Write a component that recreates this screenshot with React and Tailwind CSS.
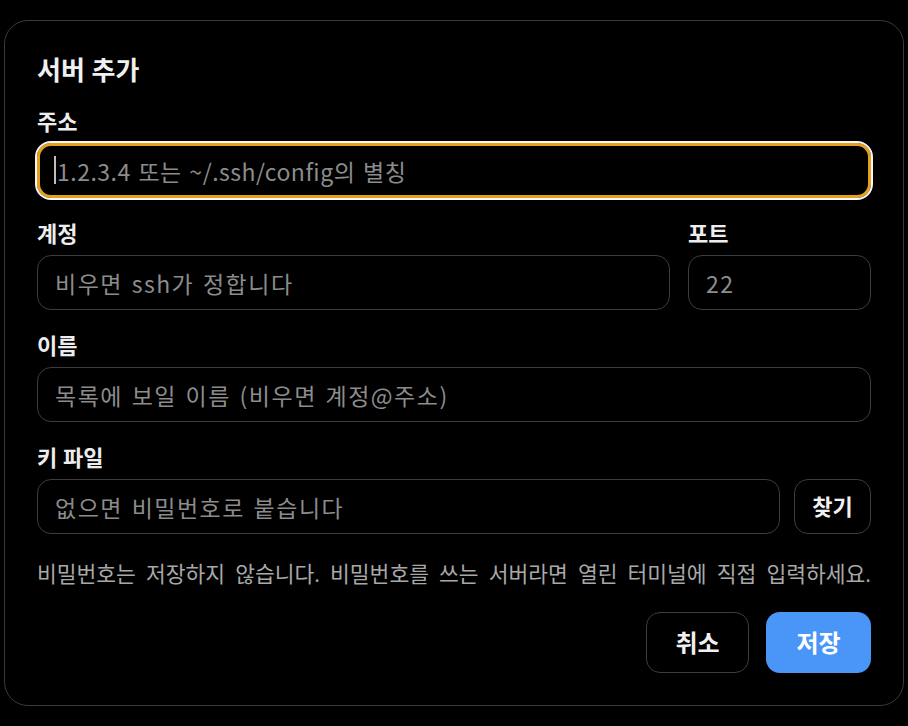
import { useState } from 'react'

const font = { fontFamily: '"Open Sans", "Noto Sans CJK KR", sans-serif' }
const inputFont = { fontFamily: '"Noto Sans CJK KR", "Noto Sans", sans-serif' }

function Field({ label, children, className = '' }) {
  return (
    <div className={`flex flex-col gap-[10px] ${className}`}>
      <label className="text-[22px] font-bold leading-[24px] text-[#ededed]">{label}</label>
      {children}
    </div>
  )
}

function TextInput({ placeholder, value, onChange, className = '' }) {
  return (
    <input
      value={value}
      onChange={onChange}
      placeholder={placeholder}
      style={inputFont}
      className={`h-[55px] w-full min-w-0 rounded-[14px] border border-[#3d3d3d] bg-black px-[17px] text-[23px] tracking-[1.5px] [word-spacing:2px] text-[#e5e5e5] placeholder:text-[#8c8c8c] outline-none ${className}`}
    />
  )
}

export default function App() {
  const [form, setForm] = useState({ host: '', user: '', port: '', name: '', key: '' })
  const set = (k) => (e) => setForm({ ...form, [k]: e.target.value })

  return (
    <div className="min-h-screen bg-black flex items-center justify-center px-[4px] py-[20px]" style={font}>
      <div className="w-[900px] rounded-[24px] border border-[#3a3a3a] bg-black px-8 pt-[33px] pb-8 flex flex-col">
        <h2 className="text-[26px] font-bold leading-[32px] text-[#f0f0f0]">서버 추가</h2>

        <Field label="주소" className="mt-[23px]">
          <div className="relative">
            <input
              value={form.host}
              onChange={set('host')}
              placeholder="1.2.3.4 또는 ~/.ssh/config의 별칭"
              style={inputFont}
              className="h-[55px] w-full rounded-[14px] border-[3px] border-[#e5a01d] bg-black pl-[17px] pr-[15px] text-[23px] tracking-[0.5px] [word-spacing:2px] text-[#e5e5e5] placeholder:text-[#8c8c8c] outline-2 outline-offset-0 outline-[#f7f7f7] outline-solid"
            />
            <span className="pointer-events-none absolute left-[17px] top-[13px] h-[28px] w-[2px] bg-[#bdbdbd]" />
          </div>
        </Field>

        <div className="mt-[23px] flex gap-[18px]">
          <Field label="계정" className="flex-1 min-w-0">
            <TextInput placeholder="비우면 ssh가 정합니다" value={form.user} onChange={set('user')} />
          </Field>
          <Field label="포트" className="w-[183px]">
            <TextInput placeholder="22" value={form.port} onChange={set('port')} />
          </Field>
        </div>

        <Field label="이름" className="mt-[23px]">
          <TextInput placeholder="목록에 보일 이름 (비우면 계정@주소)" value={form.name} onChange={set('name')} />
        </Field>

        <Field label="키 파일" className="mt-[23px]">
          <div className="flex gap-[14px]">
            <TextInput placeholder="없으면 비밀번호로 붙습니다" value={form.key} onChange={set('key')} className="flex-1" />
            <button className="h-[55px] w-[77px] shrink-0 rounded-[14px] border border-[#3d3d3d] bg-black text-[22px] font-bold text-[#f0f0f0]">
              찾기
            </button>
          </div>
        </Field>

        <p className="mt-[26px] text-[21.5px] leading-[28px] [word-spacing:4.5px] text-[#a8a8a8]">
          비밀번호는 저장하지 않습니다. 비밀번호를 쓰는 서버라면 열린 터미널에 직접 입력하세요.
        </p>

        <div className="mt-[24px] flex justify-end gap-[17px]">
          <button className="h-[61px] w-[103px] rounded-[14px] border border-[#3d3d3d] bg-black text-[24px] font-bold text-[#f0f0f0]">
            취소
          </button>
          <button className="h-[61px] w-[105px] rounded-[14px] bg-[#4a96f8] text-[24px] font-bold text-white">
            저장
          </button>
        </div>
      </div>
    </div>
  )
}
